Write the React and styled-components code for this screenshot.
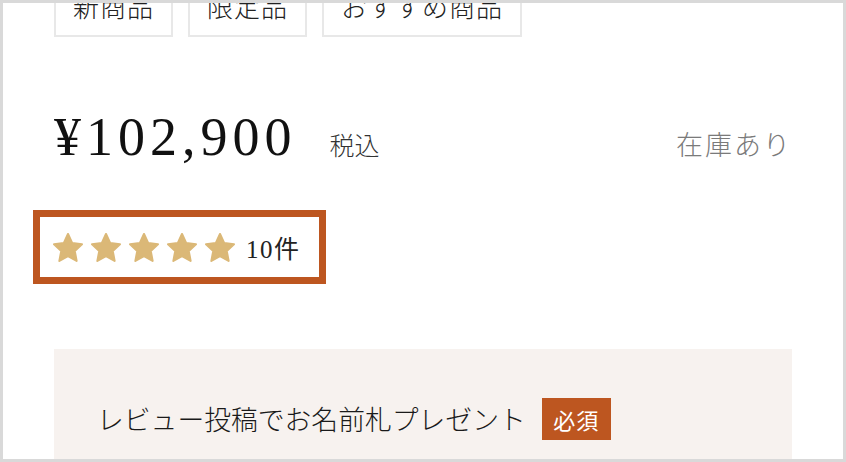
import React from "react";
import styled, { createGlobalStyle } from "styled-components";

const GlobalStyle = createGlobalStyle`
  html, body { margin: 0; padding: 0; background: #ffffff; }
  * { box-sizing: border-box; }
`;

const Frame = styled.div`
  width: 846px;
  height: 462px;
  border: 3px solid #d9d9d9;
  background: #ffffff;
  overflow: hidden;
`;

const Content = styled.div`
  padding: 0 51px;
  display: flex;
  flex-direction: column;
`;

const TagRow = styled.div`
  display: flex;
  gap: 15px;
  margin-top: -25px;
`;

const Tag = styled.span`
  display: inline-block;
  border: 2px solid #e8e8e8;
  padding: 6px 17px 10px;
  font-family: "Noto Sans CJK JP", sans-serif;
  font-weight: 300;
  font-size: 26px;
  line-height: 39px;
  letter-spacing: 1px;
  color: #222;
`;

const PriceRow = styled.div`
  display: flex;
  align-items: baseline;
  margin-top: 73px;
`;

const Price = styled.span`
  font-family: "Liberation Serif", serif;
  font-size: 54px;
  line-height: 54px;
  letter-spacing: 5px;
  color: #111;
`;

const Tax = styled.span`
  margin-left: 33px;
  font-family: "Noto Sans CJK JP", sans-serif;
  font-weight: 300;
  font-size: 25px;
  color: #333;
`;

const Stock = styled.span`
  margin-left: auto;
  font-family: "Noto Sans CJK JP", sans-serif;
  font-weight: 300;
  font-size: 27px;
  letter-spacing: 2px;
  color: #7a7a7a;
`;

const Rating = styled.div`
  align-self: flex-start;
  display: flex;
  align-items: center;
  height: 60px;
  margin-top: 53px;
  margin-left: -14px;
  padding: 0 18px 0 13px;
  outline: 7px solid #bd5620;
  gap: 8px;
`;

const Star = styled.svg`
  width: 30px;
  height: 29px;
  display: block;
`;

const Count = styled.span`
  margin-left: 3px;
  font-family: "Liberation Serif", "Noto Sans CJK JP", serif;
  font-size: 25px;
  letter-spacing: 1.5px;
  color: #222;
`;

const Panel = styled.div`
  margin-top: 72px;
  background: #f7f2ef;
  padding: 49px 43px 30px;
  display: flex;
  align-items: center;
  gap: 16px;
`;

const PanelTitle = styled.span`
  font-family: "Noto Sans CJK JP", sans-serif;
  font-weight: 300;
  font-size: 26.8px;
  line-height: 42px;
  color: #1a1a1a;
`;

const Badge = styled.span`
  display: inline-flex;
  align-items: center;
  justify-content: center;
  width: 69px;
  height: 42px;
  background: #bd5620;
  color: #ffffff;
  font-family: "Noto Sans CJK JP", sans-serif;
  font-size: 22px;
  letter-spacing: 1px;
`;

const StarIcon = () => (
  <Star viewBox="1.9 1.9 20.2 19.4" preserveAspectRatio="none">
    <path
      d="M12 2.6l2.85 6.05 6.55.8-4.85 4.55 1.25 6.55L12 17.35l-5.8 3.2 1.25-6.55L2.6 9.45l6.55-.8z"
      fill="#dbb877"
      stroke="#dbb877"
      strokeWidth="1.4"
      strokeLinejoin="round"
    />
  </Star>
);

export default function App() {
  return (
    <>
      <GlobalStyle />
      <Frame>
        <Content>
          <TagRow>
            <Tag>新商品</Tag>
            <Tag>限定品</Tag>
            <Tag>おすすめ商品</Tag>
          </TagRow>
          <PriceRow>
            <Price>¥102,900</Price>
            <Tax>税込</Tax>
            <Stock>在庫あり</Stock>
          </PriceRow>
          <Rating>
            {[0, 1, 2, 3, 4].map((i) => (
              <StarIcon key={i} />
            ))}
            <Count>10件</Count>
          </Rating>
          <Panel>
            <PanelTitle>レビュー投稿でお名前札プレゼント</PanelTitle>
            <Badge>必須</Badge>
          </Panel>
        </Content>
      </Frame>
    </>
  );
}
